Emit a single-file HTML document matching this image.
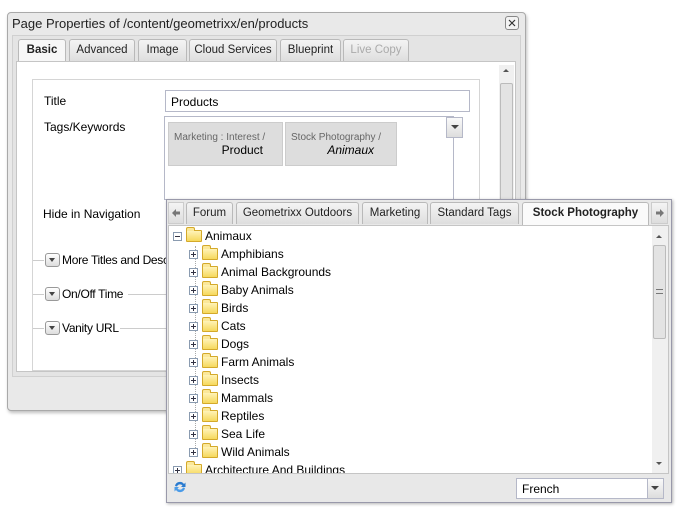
<!DOCTYPE html>
<html><head><style>
*{margin:0;padding:0;box-sizing:border-box}
body{width:678px;height:507px;background:#fff;font-family:"Liberation Sans",Tahoma,sans-serif;font-size:12px;color:#000;position:relative;overflow:hidden}
.a{position:absolute}
.dlg{left:7px;top:12px;width:519px;height:399px;background:#e9e9e9;border:1px solid #a9a9a9;border-radius:4px;box-shadow:1px 2px 3px rgba(0,0,0,.25)}
.tab{position:absolute;top:39px;height:22px;border:1px solid #b9b9b9;border-bottom:none;background:linear-gradient(#f4f4f4,#dedede);border-radius:3px 3px 0 0;text-align:center;line-height:20px;font-size:11.5px;color:#222;white-space:nowrap;overflow:hidden}
.lbl{position:absolute;font-size:12px;white-space:nowrap}
.chip{position:absolute;background:#ddd;border:1px solid #ccc;font-size:10px;color:#666;padding:9px 0 0 5px;height:44px}
.tg{position:absolute;width:15px;height:14px;border:1px solid #999;border-radius:3px;background:linear-gradient(#fff,#ddd)}
.tg:after{content:"";position:absolute;left:3px;top:4px;border-left:3px solid transparent;border-right:3px solid transparent;border-top:4px solid #444}
.fl{position:absolute;height:1px;background:#ccc}
.ptab{position:absolute;top:202px;height:22px;border:1px solid #b9b9b9;border-bottom:none;background:linear-gradient(#f4f4f4,#dedede);border-radius:3px 3px 0 0;text-align:center;line-height:20px;color:#222;font-size:11.5px;white-space:nowrap;overflow:hidden}
.row{position:absolute;height:18px;line-height:18px;font-size:12px}
.pl{position:absolute;width:9px;height:9px;border:1px solid #8a9bb0;background:#fff;top:5px}
.pl:before{content:"";position:absolute;left:1px;top:3px;width:5px;height:1px;background:#334}
.pl.p:after{content:"";position:absolute;left:3px;top:1px;width:1px;height:5px;background:#334}
.fd{position:absolute;width:16px;height:12px;top:3px;border:1px solid #d4a92a;border-radius:1px;background:linear-gradient(#fff3b8,#f6d85c)}
.fd:before{content:"";position:absolute;left:-1px;top:-4px;width:7px;height:3px;border:1px solid #d4a92a;border-bottom:none;background:#fbe89a;border-radius:2px 2px 0 0}
</style></head><body>
<div class="a dlg"></div>
<div class="a" style="left:12px;top:16px;font-size:13px;color:#222">Page Properties of /content/geometrixx/en/products</div>
<div class="a" style="left:505px;top:16px;width:14px;height:14px;border:1px solid #888;border-radius:3px;background:#f3f3f3"><svg width="12" height="12" style="position:absolute;left:0;top:0"><path d="M3 3L9 9M9 3L3 9" stroke="#333" stroke-width="1.2"/></svg></div>
<div class="a" style="left:12px;top:35px;width:509px;height:342px;border:1px solid #d0d0d0;background:#e4e4e4"></div>
<div class="tab" style="left:18px;width:48px;background:#f7f7f7;font-weight:bold;height:23px">Basic</div>
<div class="tab" style="left:69px;width:66px">Advanced</div>
<div class="tab" style="left:138px;width:49px">Image</div>
<div class="tab" style="left:189px;width:88px">Cloud Services</div>
<div class="tab" style="left:280px;width:61px">Blueprint</div>
<div class="tab" style="left:343px;width:66px;color:#aaa">Live Copy</div>
<div class="a" style="left:16px;top:61px;width:500px;height:311px;background:#fff;border:1px solid #c5c5c5"></div>
<div class="a" style="left:499px;top:65px;width:15px;height:305px;background:#f0f0f0"></div>
<div class="a" style="left:500px;top:83px;width:13px;height:130px;background:#e3e3e3;border:1px solid #bbb;border-radius:2px"></div>
<div class="a" style="left:503px;top:69px;border-left:3px solid transparent;border-right:3px solid transparent;border-bottom:3px solid #555"></div>
<div class="a" style="left:32px;top:79px;width:448px;height:292px;border:1px solid #d5d5d5"></div>
<div class="lbl" style="left:44px;top:94px">Title</div>
<div class="a" style="left:165px;top:90px;width:305px;height:22px;border:1px solid #b5b8c8;font-size:12px;padding:4px 5px">Products</div>
<div class="lbl" style="left:44px;top:120px">Tags/Keywords</div>
<div class="a" style="left:164px;top:116px;width:290px;height:84px;border:1px solid #b5b8c8;background:#fff"></div>
<div class="a" style="left:446px;top:117px;width:17px;height:21px;border:1px solid #b5b8c8;background:linear-gradient(#fafafa,#ddd)"></div>
<div class="a" style="left:451px;top:125px;border-left:4px solid transparent;border-right:4px solid transparent;border-top:4px solid #444"></div>
<div class="chip" style="left:168px;top:122px;width:115px">Marketing : Interest /<div style="font-size:12px;color:#000;text-align:right;padding-right:19px;margin-top:0">Product</div></div>
<div class="chip" style="left:285px;top:122px;width:112px">Stock Photography /<div style="font-size:12px;color:#000;font-style:italic;text-align:right;padding-right:22px">Animaux</div></div>
<div class="lbl" style="left:43px;top:207px">Hide in Navigation</div>
<div class="fl" style="left:33px;top:260px;width:11px"></div><div class="tg" style="left:45px;top:253px"></div><div class="lbl" style="left:62px;top:253px;letter-spacing:-0.3px">More Titles and Descri</div>
<div class="fl" style="left:33px;top:294px;width:11px"></div><div class="tg" style="left:45px;top:287px"></div><div class="lbl" style="left:62px;top:287px;letter-spacing:-0.3px">On/Off Time</div><div class="fl" style="left:128px;top:294px;width:38px"></div>
<div class="fl" style="left:33px;top:328px;width:11px"></div><div class="tg" style="left:45px;top:321px"></div><div class="lbl" style="left:62px;top:321px;letter-spacing:-0.3px">Vanity URL</div><div class="fl" style="left:120px;top:328px;width:46px"></div>

<div class="a" style="left:166px;top:199px;width:506px;height:304px;border:1px solid #99a;background:#e8e8e8;box-shadow:1px 1px 3px rgba(0,0,0,.3)"></div>
<div class="a" style="left:168px;top:202px;width:16px;height:22px;background:linear-gradient(#f4f4f4,#ddd);border:1px solid #ccc"><svg width="14" height="20"><path d="M3 10L7 6V8.5H11V11.5H7V14Z" fill="#777"/></svg></div>
<div class="ptab" style="left:186px;width:47px">Forum</div>
<div class="ptab" style="left:236px;width:123px">Geometrixx Outdoors</div>
<div class="ptab" style="left:362px;width:66px">Marketing</div>
<div class="ptab" style="left:430px;width:89px">Standard Tags</div>
<div class="ptab" style="left:522px;width:127px;background:#fafafa;font-weight:bold;height:23px">Stock Photography</div>
<div class="a" style="left:651px;top:202px;width:17px;height:22px;background:linear-gradient(#f4f4f4,#ddd);border:1px solid #ccc"><svg width="15" height="20"><path d="M12 10L8 6V8.5H4V11.5H8V14Z" fill="#777"/></svg></div>
<div class="a" style="left:168px;top:225px;width:501px;height:249px;background:#fff;border:1px solid #c5c5c5;overflow:hidden">
<div class="a" style="left:483px;top:0;width:16px;height:247px;background:#f0f0f0"></div>
<div class="a" style="left:484px;top:19px;width:13px;height:94px;background:#e3e3e3;border:1px solid #bbb;border-radius:2px"></div>
<div class="a" style="left:487px;top:9px;border-left:3px solid transparent;border-right:3px solid transparent;border-bottom:3px solid #555"></div>
<div class="a" style="left:487px;top:236px;border-left:3px solid transparent;border-right:3px solid transparent;border-top:3px solid #555"></div>
<div class="a" style="left:487px;top:63px;width:7px;height:5px;border-top:1px solid #777;border-bottom:1px solid #777"></div>
<div class="a" style="left:26px;top:20px;width:1px;height:210px;border-left:1px dotted #aaa"></div>
</div>
<div id="tree"></div>
<div class="a" style="left:172px;top:479px"><svg width="16" height="16"><path d="M3 7A5 5 0 0 1 12 5L13.5 3.5V8H9L10.5 6.5A3.2 3.2 0 0 0 5 7.5Z" fill="#2a7bd0"/><path d="M13 9A5 5 0 0 1 4 11L2.5 12.5V8H7L5.5 9.5A3.2 3.2 0 0 0 11 8.5Z" fill="#4a9be8"/></svg></div>
<div class="a" style="left:516px;top:478px;width:148px;height:21px;border:1px solid #b5b8c8;background:#fff;padding:3px 5px;font-size:12px">French</div>
<div class="a" style="left:647px;top:479px;width:16px;height:19px;background:linear-gradient(#fafafa,#ddd);border-left:1px solid #b5b8c8"></div>
<div class="a" style="left:651px;top:486px;border-left:4px solid transparent;border-right:4px solid transparent;border-top:4px solid #444"></div>
<script>
var t=document.getElementById('tree'),h='';
h+='<div class="row" style="left:173px;top:227px;width:480px"><span class="pl" style="left:0"></span><span class="fd" style="left:13px"></span><span style="position:absolute;left:32px">Animaux</span></div>';
var n=["Amphibians","Animal Backgrounds","Baby Animals","Birds","Cats","Dogs","Farm Animals","Insects","Mammals","Reptiles","Sea Life","Wild Animals"];
n.forEach(function(s,i){h+='<div class="row" style="left:189px;top:'+(245+i*18)+'px;width:460px"><span class="pl p" style="left:0"></span><span class="fd" style="left:13px"></span><span style="position:absolute;left:32px">'+s+'</span></div>';});
h+='<div class="row" style="left:173px;top:461px;width:480px;height:12px;overflow:hidden"><span class="pl p" style="left:0"></span><span class="fd" style="left:13px"></span><span style="position:absolute;left:32px">Architecture And Buildings</span></div>';
t.innerHTML=h;
</script>
</body></html>
